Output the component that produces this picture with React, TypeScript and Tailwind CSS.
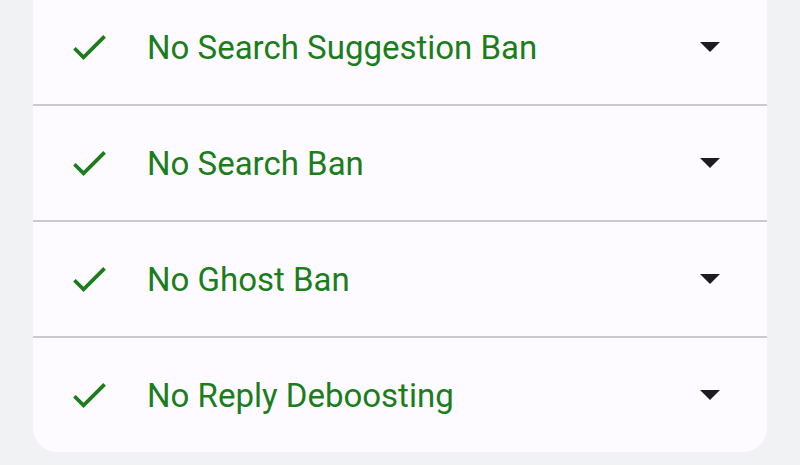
import React from "react";

const items = [
  "No Search Suggestion Ban",
  "No Search Ban",
  "No Ghost Ban",
  "No Reply Deboosting",
];

const CheckIcon = () => (
  <svg
    width="33"
    height="25"
    viewBox="3.41 5.59 17.59 13.41"
    className="shrink-0 fill-[#1b7d1b]"
  >
    <path d="M9 16.17L4.83 12l-1.42 1.41L9 19 21 7l-1.41-1.41z" />
  </svg>
);

const DropIcon = () => (
  <svg width="20" height="10" viewBox="7 10 10 5" className="shrink-0 fill-[#1c1b1f]">
    <path d="M7 10l5 5 5-5z" />
  </svg>
);

const App = () => {
  return (
    <div className="w-[800px] h-[465px] overflow-hidden bg-[#f1f2f4] px-[33px] font-['Roboto',sans-serif]">
      <div className="mt-[-10px] rounded-b-3xl bg-[#fdfbff] overflow-hidden">
        {items.map((label, i) => (
          <div
            key={label}
            className={
              i < items.length - 1
                ? "flex h-[116px] items-center border-b-2 border-[#cac9cd] pl-[40px] pr-[47px]"
                : "flex h-[114px] items-center pl-[40px] pr-[47px]"
            }
          >
            <CheckIcon />
            <span className="ml-[41px] flex-1 text-[33px] leading-none text-[#1b7d1b]">
              {label}
            </span>
            <DropIcon />
          </div>
        ))}
      </div>
    </div>
  );
};

export default App;
